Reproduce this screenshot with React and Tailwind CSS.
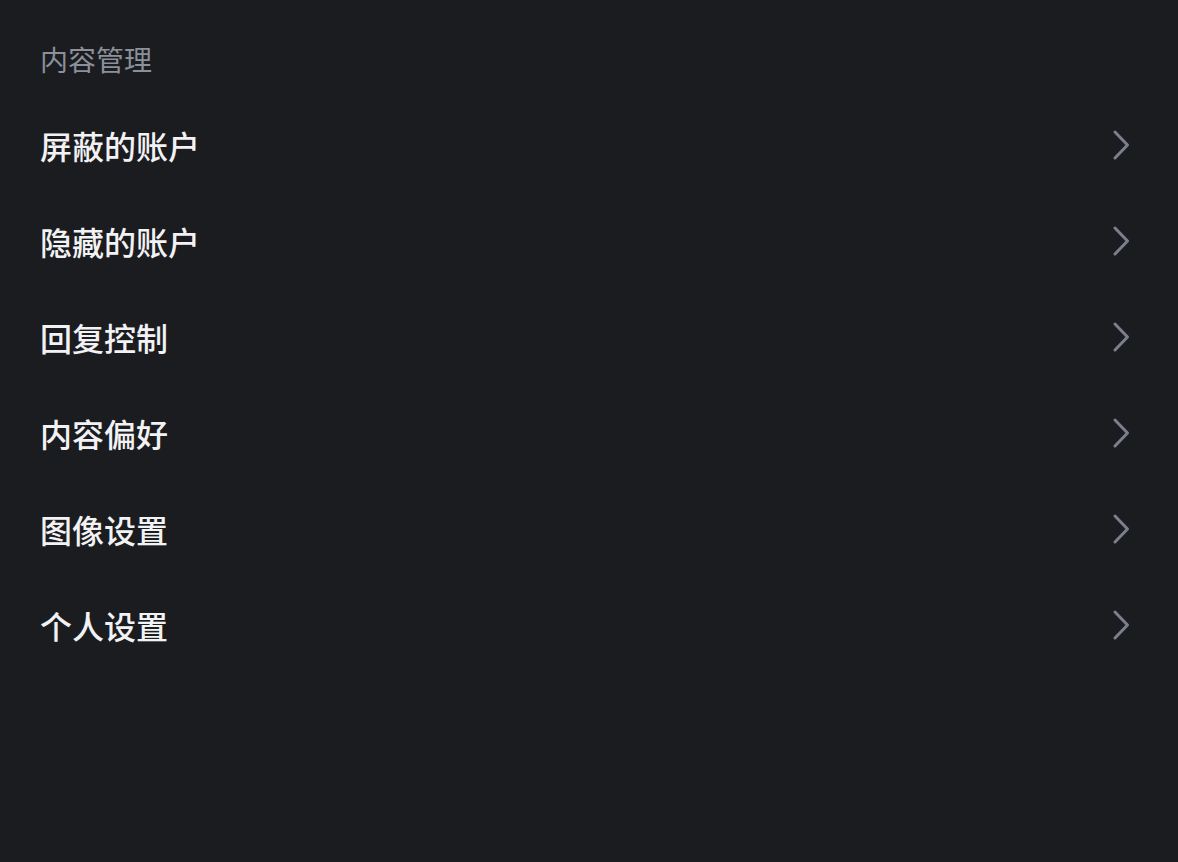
const items = ['屏蔽的账户', '隐藏的账户', '回复控制', '内容偏好', '图像设置', '个人设置'];

function Chevron() {
  return (
    <svg width="18" height="32" viewBox="0 0 18 32" fill="none" className="shrink-0">
      <path
        d="M3 3 L15.5 16 L3 29"
        stroke="#7a808b"
        strokeWidth="3"
        strokeLinecap="round"
        strokeLinejoin="round"
      />
    </svg>
  );
}

export default function App() {
  return (
    <div
      className="min-h-[862px] w-full bg-[#1b1c20]"
      style={{ fontFamily: '"Noto Sans CJK SC", "Noto Sans", sans-serif' }}
    >
      <div className="flex h-[48px] items-center px-[40px] pt-[35px] box-content">
        <span className="text-[28px] text-[#8b909a]">内容管理</span>
      </div>
      <ul className="mt-[14px]">
        {items.map((label) => (
          <li key={label} className="flex h-[96px] items-center justify-between pl-[40px] pr-[48px]">
            <span className="text-[32px] font-medium text-[#f2f2f4]">{label}</span>
            <Chevron />
          </li>
        ))}
      </ul>
    </div>
  );
}
